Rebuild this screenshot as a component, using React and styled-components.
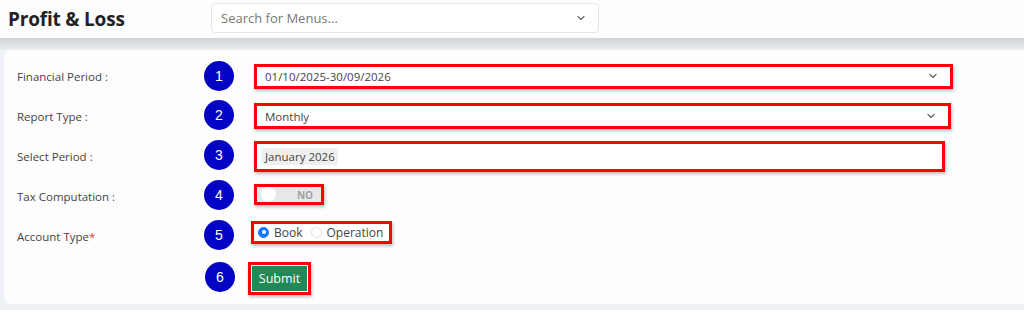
import React from 'react'
import styled, { createGlobalStyle } from 'styled-components'

const GlobalStyle = createGlobalStyle`
  html, body {
    margin: 0;
    padding: 0;
    background: #eef1f6;
    font-family: 'Open Sans', 'Noto Sans', sans-serif;
  }
  * { box-sizing: border-box; }
`

const Chevron = ({ size = 10 }) => (
  <svg width={size} height={size} viewBox="0 0 10 10" fill="none">
    <path d="M2 3.5 L5 6.5 L8 3.5" stroke="#666" strokeWidth="1.2" strokeLinecap="round" strokeLinejoin="round" />
  </svg>
)

export default function App() {
  return (
    <>
      <GlobalStyle />
      <Header>
        <Title>Profit &amp; Loss</Title>
        <MenuSearch>
          <Placeholder>Search for Menus...</Placeholder>
          <Chevron />
        </MenuSearch>
      </Header>
      <Main>
        <Card>
          <Row>
            <Label>Financial Period :</Label>
            <Badge>1</Badge>
            <Field $w={699} $h={25}>
              <Value>01/10/2025-30/09/2026</Value>
              <Chevron />
            </Field>
          </Row>
          <Row>
            <Label>Report Type :</Label>
            <Badge $dy={-3}>2</Badge>
            <Field $w={697} $h={26}>
              <Value>Monthly</Value>
              <Chevron />
            </Field>
          </Row>
          <Row>
            <Label>Select Period :</Label>
            <Badge $dy={-3}>3</Badge>
            <Field $w={691} $h={31} $pl={5}>
              <Tag>January 2026</Tag>
            </Field>
          </Row>
          <Row>
            <Label>Tax Computation :</Label>
            <Badge $dy={-3}>4</Badge>
            <Outline $dy={-3}>
              <Switch>
                <Knob />
                <SwitchText>NO</SwitchText>
              </Switch>
            </Outline>
          </Row>
          <Row>
            <Label>
              Account Type<Required>*</Required>
            </Label>
            <Badge $dy={-3}>5</Badge>
            <Outline $dy={-8} $ml={-3}>
              <RadioGroup>
                <RadioItem>
                  <Radio $checked />
                  Book
                </RadioItem>
                <RadioItem>
                  <Radio />
                  Operation
                </RadioItem>
              </RadioGroup>
            </Outline>
          </Row>
          <Row $h={44}>
            <Label />
            <Badge $dy={-3} $dx={1}>6</Badge>
            <Outline $ml={-7} $pad={1}>
              <SubmitButton>Submit</SubmitButton>
            </Outline>
          </Row>
        </Card>
      </Main>
    </>
  )
}

const Header = styled.header`
  height: 38px;
  background: #fdfdfd;
  display: flex;
  align-items: center;
  padding: 0 8px;
`

const Title = styled.h1`
  margin: 0;
  width: 203px;
  font-size: 19px;
  font-weight: 700;
  color: #222;
  letter-spacing: -0.2px;
`

const MenuSearch = styled.div`
  width: 388px;
  height: 30px;
  margin-top: -3px;
  border: 1px solid #e3e5e8;
  border-radius: 4px;
  background: #fff;
  display: flex;
  align-items: center;
  justify-content: space-between;
  padding: 0 12px 0 9px;
`

const Placeholder = styled.span`
  font-size: 13px;
  color: #777;
`

const Main = styled.main`
  background: linear-gradient(#d1d3d9 0px, #e6e9ee 11px, #eef1f6 12px);
  padding: 12px 0 0 4px;
  height: 272px;
`

const Card = styled.section`
  background: #fdfdfd;
  border-radius: 6px 0 0 6px;
  height: 254px;
  padding: 6px 0 0 13px;
`

const Row = styled.div`
  display: flex;
  align-items: center;
  height: ${p => p.$h || 40}px;
`

const Label = styled.div`
  width: 187px;
  flex-shrink: 0;
  font-size: 11.5px;
  color: #444;
  padding-top: 1px;
`

const Required = styled.span`
  color: #e53935;
`

const Badge = styled.div`
  width: 30px;
  height: 30px;
  flex-shrink: 0;
  border-radius: 50%;
  background: #0303c4;
  color: #fff;
  font-family: 'Liberation Sans', Arial, sans-serif;
  font-size: 14px;
  display: flex;
  align-items: center;
  justify-content: center;
  margin-top: ${p => p.$dy || 0}px;
  margin-left: ${p => p.$dx || 0}px;
  margin-right: 20px;
`

const Field = styled.div`
  width: ${p => p.$w}px;
  height: ${p => p.$h}px;
  border: 3px solid #f00;
  box-shadow: 1px 2px 3px rgba(0, 0, 0, 0.25);
  background: #fff;
  display: flex;
  align-items: center;
  justify-content: space-between;
  padding: 0 12px 0 ${p => p.$pl || 8}px;
`

const Value = styled.span`
  font-size: 11.5px;
  color: #444;
`

const Tag = styled.span`
  font-size: 11.5px;
  color: #444;
  background: #efefef;
  border-radius: 3px;
  padding: 1px 3px;
`

const Outline = styled.div`
  border: 3px solid #f00;
  box-shadow: 1px 2px 3px rgba(0, 0, 0, 0.25);
  background: #fff;
  padding: ${p => p.$pad || 0}px;
  margin-top: ${p => p.$dy || 0}px;
  margin-left: ${p => p.$ml || 0}px;
  display: flex;
`

const Switch = styled.div`
  width: 64px;
  height: 15px;
  background: #e8e8e8;
  display: flex;
  align-items: center;
  justify-content: space-between;
  padding: 0 8px 0 4px;
`

const Knob = styled.span`
  width: 15px;
  height: 15px;
  border-radius: 50%;
  background: #fff;
`

const SwitchText = styled.span`
  font-size: 10px;
  font-weight: 700;
  color: #a0a0a0;
`

const RadioGroup = styled.div`
  display: flex;
  align-items: center;
  gap: 8px;
  height: 17px;
  padding: 0 6px 0 4px;
`

const RadioItem = styled.label`
  display: flex;
  align-items: center;
  gap: 5px;
  font-size: 12px;
  color: #444;
`

const Radio = styled.span`
  width: 11px;
  height: 11px;
  border-radius: 50%;
  background: ${p => (p.$checked ? '#1677ff' : '#fff')};
  border: 1px solid ${p => (p.$checked ? '#1677ff' : '#e2e2e2')};
  display: flex;
  align-items: center;
  justify-content: center;
  &::after {
    content: '';
    width: 4px;
    height: 4px;
    border-radius: 50%;
    background: #fff;
    display: ${p => (p.$checked ? 'block' : 'none')};
  }
`

const SubmitButton = styled.button`
  width: 55px;
  height: 25px;
  border: none;
  background: #228855;
  color: #fff;
  font-family: 'Open Sans', sans-serif;
  font-size: 12.5px;
  padding: 0;
  cursor: pointer;
`
